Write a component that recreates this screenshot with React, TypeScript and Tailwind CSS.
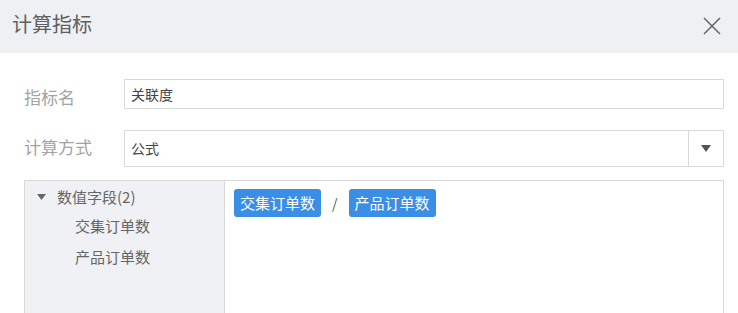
import React from "react";

const font = { fontFamily: '"Noto Sans CJK SC", "Noto Sans", sans-serif' };

export default function App() {
  return (
    <div className="w-[738px] h-[313px] overflow-hidden bg-white" style={font}>
      <div className="h-[53px] bg-[#eef0f4] flex items-center justify-between pl-[12px] pr-[16px] pb-[5px]">
        <span className="text-[20px] text-[#5f5f5f] leading-none">计算指标</span>
        <svg width="20" height="20" viewBox="0 0 20 20" className="mt-[3px]">
          <path d="M2 2 L18 18 M18 2 L2 18" stroke="#666" strokeWidth="1.5" fill="none" />
        </svg>
      </div>
      <div className="pl-[24px] pr-[14px] pt-[26px]">
        <div className="flex items-center h-[30px]">
          <span className="w-[100px] text-[17px] text-[#a3a3a3] pt-[6px]">指标名</span>
          <div className="flex-1 h-[30px] border border-[#d9d9d9] flex items-center pl-[6px] text-[14px] text-[#444]">关联度</div>
        </div>
        <div className="flex items-center h-[37px] mt-[21px]">
          <span className="w-[100px] text-[17px] text-[#a3a3a3] pb-[4px]">计算方式</span>
          <div className="flex-1 h-[37px] border border-[#d9d9d9] flex items-center text-[14px] text-[#444]">
            <span className="flex-1 pl-[6px]">公式</span>
            <div className="w-[35px] h-full border-l border-[#d9d9d9] flex items-center justify-center">
              <svg width="10" height="7" viewBox="0 0 10 7"><path d="M0 0 L10 0 L5 7 Z" fill="#555" /></svg>
            </div>
          </div>
        </div>
        <div className="mt-[13px] h-[140px] border border-[#d9d9d9] flex">
          <div className="w-[200px] bg-[#eff1f4] border-r border-[#d9d9d9] pt-[5px] text-[15px] text-[#666]">
            <div className="flex items-center h-[22px] pl-[12px]">
              <svg width="9" height="6" viewBox="0 0 9 6"><path d="M0 0 L9 0 L4.5 6 Z" fill="#666" /></svg>
              <span className="ml-[11px]">数值字段(2)</span>
            </div>
            <div className="h-[31px] flex items-center pl-[50px] mt-[3px]">交集订单数</div>
            <div className="h-[31px] flex items-center pl-[50px]">产品订单数</div>
          </div>
          <div className="flex-1 bg-white pl-[9px] pt-[8px]">
            <div className="flex items-center">
              <span className="h-[28px] px-[6px] rounded-[3px] bg-[#3a8ee6] text-white text-[15px] flex items-center">交集订单数</span>
              <span className="mx-[11px] text-[14px] text-[#555]">/</span>
              <span className="h-[28px] px-[6px] rounded-[3px] bg-[#3a8ee6] text-white text-[15px] flex items-center">产品订单数</span>
            </div>
          </div>
        </div>
      </div>
    </div>
  );
}
